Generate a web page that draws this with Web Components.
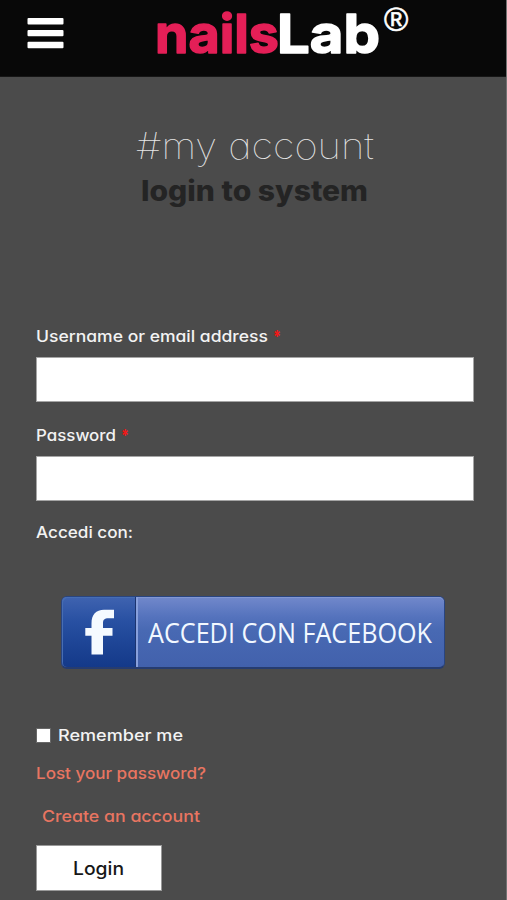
<!DOCTYPE html>
<html lang="it">
<head>
<meta charset="utf-8">
<title>nailsLab - My account</title>
<style>
body{margin:0;background:#4b4b4b;font-family:Inter,"Open Sans",sans-serif;color:#f3f3f3}
</style>
</head>
<body>
<account-page></account-page>
<script>
/* One line of text set to an exact measure. */
class TextLine extends HTMLElement {
  connectedCallback() {
    const a = (n, d) => this.getAttribute(n) || d;
    const w = a('measure'), h = a('height', '24');
    this.attachShadow({mode: 'open'}).innerHTML = `
      <style>:host{display:block;width:${w}px;height:${h}px;flex:none}
      svg{display:block;overflow:visible}
      text{fill:currentColor;font-family:inherit;font-feature-settings:var(--features,"cv11" 1)}</style>
      <svg width="${w}" height="${h}"><text x="0" y="${a('baseline', '18')}" font-size="${a('size', '16')}"
        font-weight="${a('weight', '500')}" textLength="${w}" lengthAdjust="spacingAndGlyphs"></text></svg>`;
    this.shadowRoot.querySelector('text').textContent = a('text', '');
  }
}
customElements.define('text-line', TextLine);

class SiteHeader extends HTMLElement {
  constructor() {
    super();
    this.attachShadow({mode: 'open'}).innerHTML = `
      <style>
      :host{display:flex;height:77px;box-sizing:border-box;background:#080808;border-bottom:1px solid #161616;padding-left:27px}
      .menu{width:37px;height:32px;margin-top:17px;flex:none}
      .logo{margin-left:94px;width:256px;height:76px;overflow:visible;flex:none}
      text{font-family:"Liberation Sans",Arial,sans-serif;font-weight:700}
      .word{font-family:Inter,sans-serif;font-size:54px;stroke-width:1.6;stroke-linejoin:round}
      </style>
      <svg class="menu" viewBox="0 0 37 32" fill="#fff"><rect x=".5" y="1" width="36" height="6.4" rx="1"/><rect x=".5" y="13" width="36" height="6.2" rx="1"/><rect x=".5" y="24.8" width="36" height="6.4" rx="1"/></svg>
      <svg class="logo" viewBox="0 0 256 76">
        <text class="word" x="-3" y="53" fill="#e41f57" stroke="#e41f57" textLength="124" lengthAdjust="spacingAndGlyphs">nails</text>
        <text class="word" x="119" y="53" fill="#fff" stroke="#fff" textLength="103" lengthAdjust="spacingAndGlyphs">Lab</text>
        <text x="226" y="31" font-size="33" fill="#fff" style="font-weight:400" stroke="#fff" stroke-width=".6">®</text>
      </svg>`;
  }
}
customElements.define('site-header', SiteHeader);

class FormField extends HTMLElement {
  connectedCallback() {
    this.attachShadow({mode: 'open'}).innerHTML = `
      <style>
      :host{display:block}
      .label{display:flex;height:30px;gap:5px}
      .star{color:#f01818}
      input{display:block;box-sizing:border-box;width:438px;height:45px;margin:0;border:1px solid #a5a5a5;border-radius:0;background:#fff;padding:0 12px;font:16px Inter,sans-serif;outline:0}
      </style>
      <div class="label"><text-line text="${this.getAttribute('label')}" measure="${this.getAttribute('measure')}" baseline="15" size="16"></text-line>
      <text-line class="star" text="*" measure="8" baseline="16" size="17" weight="800"></text-line></div>
      <input type="${this.getAttribute('type')}" aria-label="${this.getAttribute('label')}">`;
  }
}
customElements.define('form-field', FormField);

class FacebookButton extends HTMLElement {
  constructor() {
    super();
    this.attachShadow({mode: 'open'}).innerHTML = `
      <style>
      :host{display:flex;box-sizing:border-box;width:384px;height:73px;border-radius:6px;border:1px solid #294581;border-bottom:2px solid #263c70;color:#f2f8ff;background:linear-gradient(#7188cb,#5573bd 28%,#4869b3 48%,#4261ac);
        font-family:"Open Sans","Noto Sans",sans-serif;--features:normal}
      .mark{width:73px;flex:none;border-radius:5px 0 0 5px;background:linear-gradient(#3f63b0,#2850a2 35%,#1e4596 65%,#143989);border-right:1px solid #1b3470;box-shadow:inset 1px 1px #466db4}
      .label{flex:1;border-left:2px solid #88a0dc;padding-left:10px;border-radius:0 5px 5px 0;box-shadow:inset 0 1px #8297d2}
      svg{display:block}
      </style>
      <div class="mark"><svg width="73" height="70" viewBox="0 0 73 70"><path fill="#f5faff" d="M29.5 57.5V38.8H23.3V31H29.5V26.5C29.5 17.5 34 12.8 42 12.8H52V21.2H46.5C42.4 21.2 41 22.7 41 26V31H50.5V38.8H41V57.5Z"/></svg></div>
      <div class="label"><text-line text="ACCEDI CON FACEBOOK" measure="284" height="69" baseline="46" size="26.5" weight="400"></text-line></div>`;
  }
}
customElements.define('facebook-button', FacebookButton);

class AccountPage extends HTMLElement {
  constructor() {
    super();
    this.attachShadow({mode: 'open'}).innerHTML = `
      <style>
      :host{display:block;box-sizing:border-box;height:900px;overflow:hidden;background:#4b4b4b;border-right:1px solid #727272}
      .title{display:flex;flex-direction:column;align-items:center;height:250px;padding:47px 0 0 3px;box-sizing:border-box}
      .sub{color:#242424}
      form{display:flex;flex-direction:column;align-items:flex-start;padding-left:36px;margin:0}
      .second{margin-top:24px}
      .with{margin-top:22px}
      facebook-button{margin:49px 0 0 25px}
      .remember{display:flex;align-items:center;gap:7px;height:24px;margin-top:54px}
      .remember input{appearance:none;box-sizing:border-box;width:15px;height:15px;margin:0;background:#fff;border:1px solid #686868;border-radius:1px}
      a{color:#e87561;text-decoration:none;display:block}
      .lost{margin-top:15px}.create{margin:19px 0 0 6px}
      button{display:flex;justify-content:center;width:126px;height:46px;box-sizing:border-box;padding:10px 1px 0 0;margin:16px 0 0;background:#fff;border:1px solid #999;border-radius:0;color:#171717;font-family:inherit}
      </style>
      <site-header></site-header>
      <div class="title">
        <text-line text="#my account" measure="238" height="50" baseline="35" size="36" weight="100" style="color:#e8e8e8"></text-line>
        <text-line class="sub" text="login to system" measure="227" height="36" baseline="27" size="28" weight="800"></text-line>
      </div>
      <form>
        <form-field label="Username or email address" measure="232" type="text"></form-field>
        <form-field class="second" label="Password" measure="80" type="password"></form-field>
        <text-line class="with" text="Accedi con:" measure="97" baseline="15" size="16"></text-line>
        <facebook-button></facebook-button>
        <label class="remember"><input type="checkbox"><text-line text="Remember me" measure="125" baseline="18" size="16"></text-line></label>
        <a class="lost"><text-line text="Lost your password?" measure="170" baseline="17"></text-line></a>
        <a class="create"><text-line text="Create an account" measure="158" baseline="17"></text-line></a>
        <button type="button"><text-line text="Login" measure="51" baseline="19" size="18"></text-line></button>
      </form>`;
  }
}
customElements.define('account-page', AccountPage);
</script>
</body>
</html>
